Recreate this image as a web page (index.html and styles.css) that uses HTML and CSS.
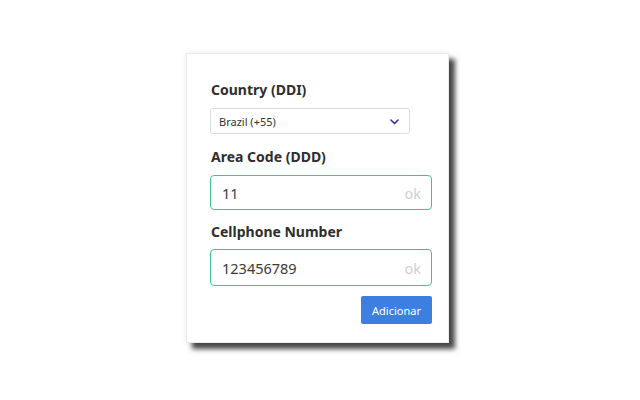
FILE: index.html
```html
<!DOCTYPE html>
<html>
<head>
<meta charset="utf-8">
<link rel="stylesheet" href="styles.css">
</head>
<body>
<div class="page">
  <form class="card">
    <label class="label">Country (DDI)</label>
    <div class="select">
      <span>Brazil (+55)</span>
      <svg class="chev" width="9" height="6" viewBox="0 0 9 6"><path d="M1 1 L4.5 4.5 L8 1" fill="none" stroke="#3b2ea0" stroke-width="1.6" stroke-linecap="round" stroke-linejoin="round"/></svg>
    </div>
    <label class="label l2">Area Code (DDD)</label>
    <div class="input"><span>11</span><span class="ok">ok</span></div>
    <label class="label l3">Cellphone Number</label>
    <div class="input i2"><span>123456789</span><span class="ok">ok</span></div>
    <div class="actions"><button type="button" class="btn">Adicionar</button></div>
  </form>
</div>
</body>
</html>
```
FILE: styles.css
```css
html, body {
  margin: 0;
  padding: 0;
  background: #fff;
}
.page {
  width: 640px;
  height: 400px;
  display: flex;
  justify-content: center;
  align-items: flex-start;
  padding-top: 53px;
  box-sizing: border-box;
  font-family: "Noto Sans", "Open Sans", sans-serif;
}
.card {
  margin-left: -5px;
  width: 263px;
  height: 290px;
  box-sizing: border-box;
  background: #fff;
  border: 1px solid #ececec;
  box-shadow: 0 0 6px rgba(0,0,0,0.08), 6px 6px 5px rgba(0,0,0,0.72);
  padding: 25px 16px 0 23px;
  display: flex;
  flex-direction: column;
}
.label {
  font-size: 14px;
  font-weight: 700;
  color: #2e2e2e;
  line-height: 22px;
  height: 22px;
  margin-left: 1px;
}
.select {
  margin-top: 7px;
  width: 200px;
  height: 26px;
  box-sizing: border-box;
  border: 1px solid #dcdcdc;
  border-radius: 3px;
  display: flex;
  align-items: center;
  justify-content: space-between;
  padding: 0 10px 0 8px;
  font-size: 11px;
  color: #333;
}
.chev { margin-top: 1px; }
.l2 { margin-top: 12px; }
.l3 { margin-top: 11px; }
.input {
  margin-top: 7px;
  height: 35px;
  box-sizing: border-box;
  border: 1px solid #3ec48d;
  border-radius: 4px;
  display: flex;
  align-items: center;
  justify-content: space-between;
  padding: 0 10px 0 11px;
  font-size: 14.5px;
  color: #3a3a3a;
}
.i2 { margin-top: 6px; height: 37px; }
.ok { color: #cfcfcf; }
.actions {
  margin-top: 10px;
  display: flex;
  justify-content: flex-end;
}
.btn {
  width: 71px;
  height: 28px;
  border: none;
  border-radius: 2px;
  background: #3d7fe0;
  color: #fff;
  font-family: "Noto Sans", "Open Sans", sans-serif;
  font-size: 11px;
  padding: 0;
}
```
